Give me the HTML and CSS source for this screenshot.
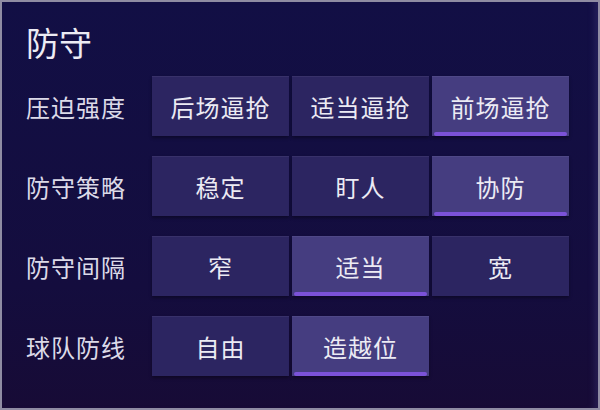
FILE: index.html
```html
<!DOCTYPE html>
<html lang="zh-CN">
<head>
    <meta charset="UTF-8">
    <title>防守</title>
    <link rel="stylesheet" href="styles.css">
</head>
<body>
    <div class="panel">
        <h1 class="title">防守</h1>
        <div class="settings">
            <div class="row">
                <span class="label">压迫强度</span>
                <div class="options">
                    <button class="option">后场逼抢</button>
                    <button class="option">适当逼抢</button>
                    <button class="option active">前场逼抢</button>
                </div>
            </div>
            <div class="row">
                <span class="label">防守策略</span>
                <div class="options">
                    <button class="option">稳定</button>
                    <button class="option">盯人</button>
                    <button class="option active">协防</button>
                </div>
            </div>
            <div class="row">
                <span class="label">防守间隔</span>
                <div class="options">
                    <button class="option">窄</button>
                    <button class="option active">适当</button>
                    <button class="option">宽</button>
                </div>
            </div>
            <div class="row">
                <span class="label">球队防线</span>
                <div class="options">
                    <button class="option">自由</button>
                    <button class="option active">造越位</button>
                </div>
            </div>
        </div>
    </div>
</body>
</html>
```

FILE: styles.css
```css
:root {
    --bg-top: #120f45;
    --bg-bottom: #170b36;
    --option: #2c2561;
    --option-active: #453d80;
    --accent: #7b52d8;
    --text: #ecebf4;
    --label: #dcdae8;
}

* {
    box-sizing: border-box;
}

body {
    margin: 0;
    background: #14103f;
    font-family: "Noto Sans CJK SC", "Noto Sans", sans-serif;
}

.panel {
    width: 600px;
    height: 410px;
    border: 2px solid #8f8ca3;
    background: linear-gradient(180deg, var(--bg-top) 0%, #140d3e 70%, var(--bg-bottom) 100%);
    padding: 14px 0 0 24px;
    box-shadow: inset -8px 0 6px -4px rgba(70, 60, 130, 0.35);
}

.title {
    margin: 0;
    font-size: 33px;
    font-weight: 400;
    line-height: 52px;
    color: var(--text);
}

.settings {
    display: flex;
    flex-direction: column;
    gap: 20px;
    margin-top: 8px;
}

.row {
    display: flex;
    align-items: center;
}

.label {
    width: 126px;
    font-size: 24px;
    color: var(--label);
    letter-spacing: 1px;
}

.options {
    display: grid;
    grid-template-columns: repeat(3, 137px);
    gap: 3px;
}

.option {
    position: relative;
    height: 60px;
    border: none;
    background: var(--option);
    color: var(--text);
    font-family: inherit;
    font-size: 24px;
    letter-spacing: 1px;
    box-shadow: inset 0 1px 0 rgba(255, 255, 255, 0.06), 0 2px 3px rgba(0, 0, 0, 0.35);
}

.option.active {
    background: var(--option-active);
}

.option.active::after {
    content: "";
    position: absolute;
    left: 2px;
    right: 2px;
    bottom: 0;
    height: 4px;
    border-radius: 2px;
    background: var(--accent);
}
```
